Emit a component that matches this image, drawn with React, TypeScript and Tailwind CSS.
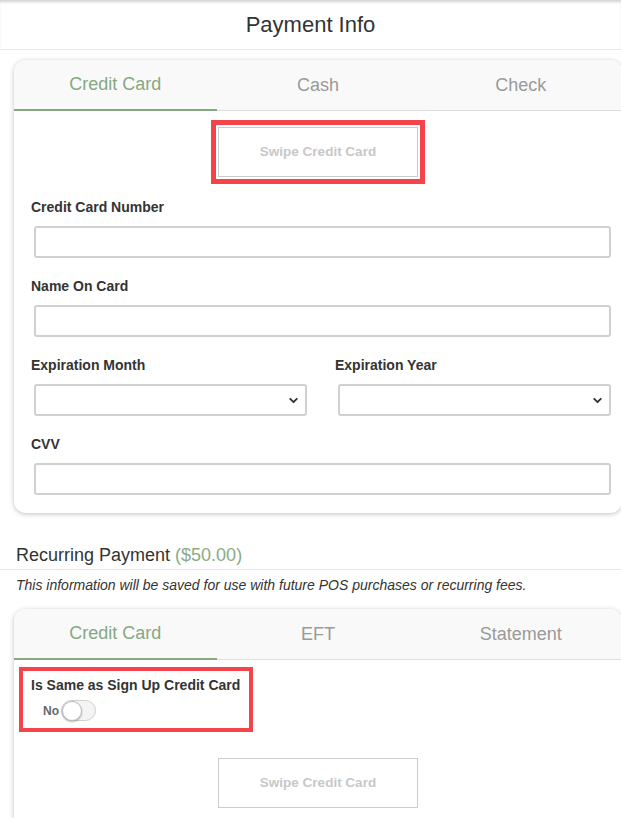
import { ChevronDown } from "lucide-react";

const font = { fontFamily: '"Liberation Sans", Arial, sans-serif' };

function Tabs({ items }: { items: string[] }) {
  return (
    <div className="flex h-[51px] border-b border-[#dedede] bg-[#f9f9f9] rounded-t-[12px]">
      {items.map((t, i) => (
        <div
          key={t}
          className={
            i === 0
              ? "flex-1 flex items-center justify-center text-[18px] text-[#86a883] border-b-2 border-[#86a883] -mb-px"
              : "flex-1 flex items-center justify-center text-[18px] text-[#9a9a9a]"
          }
        >
          {t}
        </div>
      ))}
    </div>
  );
}

function SwipeButton({ outlined }: { outlined?: boolean }) {
  return (
    <div className="flex justify-center">
      <button
        className={
          outlined
            ? "w-[200px] h-[50px] border border-[#cccccc] bg-white text-[13.5px] font-bold text-[#c8c8c8] outline-[5px] outline-solid outline-[#f2444a] outline-offset-[2px]"
            : "w-[200px] h-[50px] border border-[#cccccc] bg-white text-[13.5px] font-bold text-[#c8c8c8]"
        }
      >
        Swipe Credit Card
      </button>
    </div>
  );
}

function Label({ children }: { children: React.ReactNode }) {
  return <div className="text-[14px] leading-4 font-bold text-[#333]">{children}</div>;
}

function Input() {
  return <div className="mt-[11px] ml-[3px] h-[32px] rounded-[3px] border-2 border-[#d0d0d0] bg-white" />;
}

function Select() {
  return (
    <div className="mt-[11px] ml-[3px] h-[32px] rounded-[3px] border-2 border-[#d0d0d0] bg-white flex items-center justify-end pr-[5px]">
      <ChevronDown className="h-[13px] w-[13px] text-[#333]" strokeWidth={3.5} />
    </div>
  );
}

export default function App() {
  return (
    <div className="min-h-screen bg-white overflow-hidden" style={font}>
      {/* Header */}
      <header className="h-[50px] border-b border-[#e8e8e8] flex items-center justify-center shadow-[inset_0_3px_3px_-1px_rgba(0,0,0,0.18)]">
        <h1 className="text-[22px] text-[#333] pb-px">Payment Info</h1>
      </header>

      {/* Payment card */}
      <div className="ml-[14px] mt-[10px] w-[608px] rounded-[12px] bg-white shadow-[0_1px_5px_rgba(0,0,0,0.25)]">
        <Tabs items={["Credit Card", "Cash", "Check"]} />
        <div className="pt-[16px]">
          <SwipeButton outlined />
        </div>
        <div className="pl-[17px] pr-[11px] pb-[18px]">
          <div className="mt-[22px]">
            <Label>Credit Card Number</Label>
            <Input />
          </div>
          <div className="mt-[20px]">
            <Label>Name On Card</Label>
            <Input />
          </div>
          <div className="mt-[20px] grid grid-cols-2 gap-x-[28px]">
            <div>
              <Label>Expiration Month</Label>
              <Select />
            </div>
            <div>
              <Label>Expiration Year</Label>
              <Select />
            </div>
          </div>
          <div className="mt-[20px]">
            <Label>CVV</Label>
            <Input />
          </div>
        </div>
      </div>

      {/* Recurring */}
      <div className="mt-[32px]">
        <div className="px-[16px] pb-[3px] text-[18px] leading-[21px] text-[#333] border-b border-[#e5e5e5]">
          Recurring Payment <span className="text-[#8aab86]">($50.00)</span>
        </div>
        <p className="px-[16px] pt-[7px] text-[14px] leading-4 italic text-[#333]">
          This information will be saved for use with future POS purchases or recurring fees.
        </p>
      </div>

      <div className="ml-[14px] mt-[16px] w-[608px] rounded-[12px] bg-white shadow-[0_1px_5px_rgba(0,0,0,0.25)]">
        <Tabs items={["Credit Card", "EFT", "Statement"]} />
        <div className="pl-[5px] pt-[7px]">
          <div className="inline-block border-[4px] border-[#f2444a] pl-[8px] pr-[9px] pt-[6px] pb-[7px]">
            <div className="text-[14px] leading-4 font-bold text-[#333]">Is Same as Sign Up Credit Card</div>
            <div className="mt-[7px] ml-[12px] flex items-center">
              <span className="text-[12px] font-bold text-[#666]">No</span>
              <span className="ml-[2px] w-[35px] h-[21px] rounded-full border border-[#cfcfcf] bg-[#f4f4f4] flex items-center">
                <span className="w-[20px] h-[20px] rounded-full bg-white border border-[#bdbdbd] shadow-[0_1px_2px_rgba(0,0,0,0.3)]" />
              </span>
            </div>
          </div>
        </div>
        <div className="pt-[26px] pb-[20px]">
          <SwipeButton />
        </div>
      </div>
    </div>
  );
}
